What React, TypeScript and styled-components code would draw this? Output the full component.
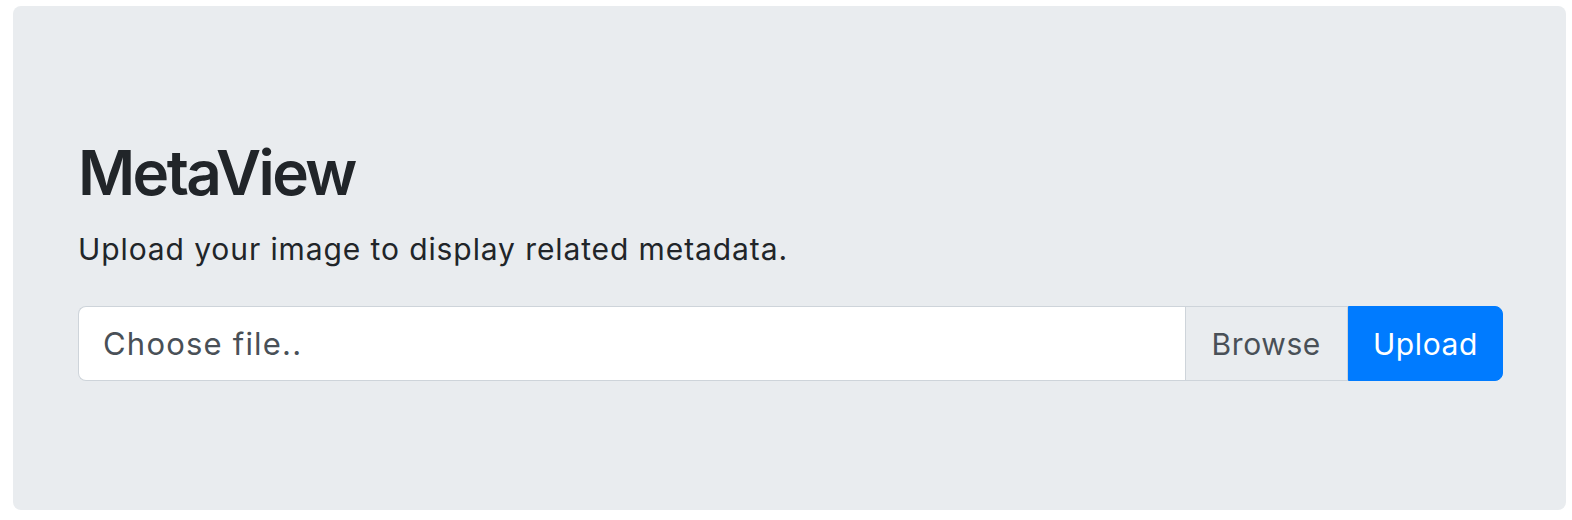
import React from "react";
import styled, { createGlobalStyle } from "styled-components";

const GlobalStyle = createGlobalStyle`
  html, body {
    margin: 0;
    padding: 0;
    background: #fff;
  }
  body {
    font-family: Inter, "Noto Sans", "Liberation Sans", sans-serif;
    color: #212529;
  }
`;

const Jumbotron = styled.section`
  margin: 6px 6px 10px 13px;
  padding: 128px 63px 129px 65px;
  background-color: #e9ecef;
  border-radius: 8px;
`;

const Title = styled.h1`
  margin: 0 0 16px;
  font-size: 62px;
  line-height: 77px;
  font-weight: 600;
  letter-spacing: -2.6px;
  color: #212529;
`;

const Lead = styled.p`
  margin: 0 0 35px;
  font-size: 30px;
  line-height: 44px;
  font-weight: 400;
  letter-spacing: 0.9px;
  color: #212529;
`;

const InputGroup = styled.div`
  display: flex;
  align-items: stretch;
  height: 75px;
`;

const FileLabel = styled.label`
  flex: 1;
  display: flex;
  align-items: center;
  padding: 0 24px;
  background: #fff;
  border: 1px solid #ced4da;
  border-right: none;
  border-radius: 8px 0 0 8px;
  font-size: 31px;
  letter-spacing: 1.2px;
  color: #495057;
  cursor: pointer;
`;

const Addon = styled.span<{ $primary?: boolean }>`
  display: flex;
  align-items: center;
  padding: ${(p) => (p.$primary ? "0 24px" : "0 26px")};
  font-size: 30px;
  letter-spacing: 0.6px;
  color: ${(p) => (p.$primary ? "#fff" : "#495057")};
  background: ${(p) => (p.$primary ? "#007bff" : "#e9ecef")};
  border: 1px solid ${(p) => (p.$primary ? "#007bff" : "#ced4da")};
  border-radius: ${(p) => (p.$primary ? "0 8px 8px 0" : "0")};
  cursor: pointer;
`;

export default function App() {
  return (
    <>
      <GlobalStyle />
      <Jumbotron>
        <Title>MetaView</Title>
        <Lead>Upload your image to display related metadata.</Lead>
        <InputGroup>
          <FileLabel>Choose file..</FileLabel>
          <Addon>Browse</Addon>
          <Addon $primary>Upload</Addon>
        </InputGroup>
      </Jumbotron>
    </>
  );
}
